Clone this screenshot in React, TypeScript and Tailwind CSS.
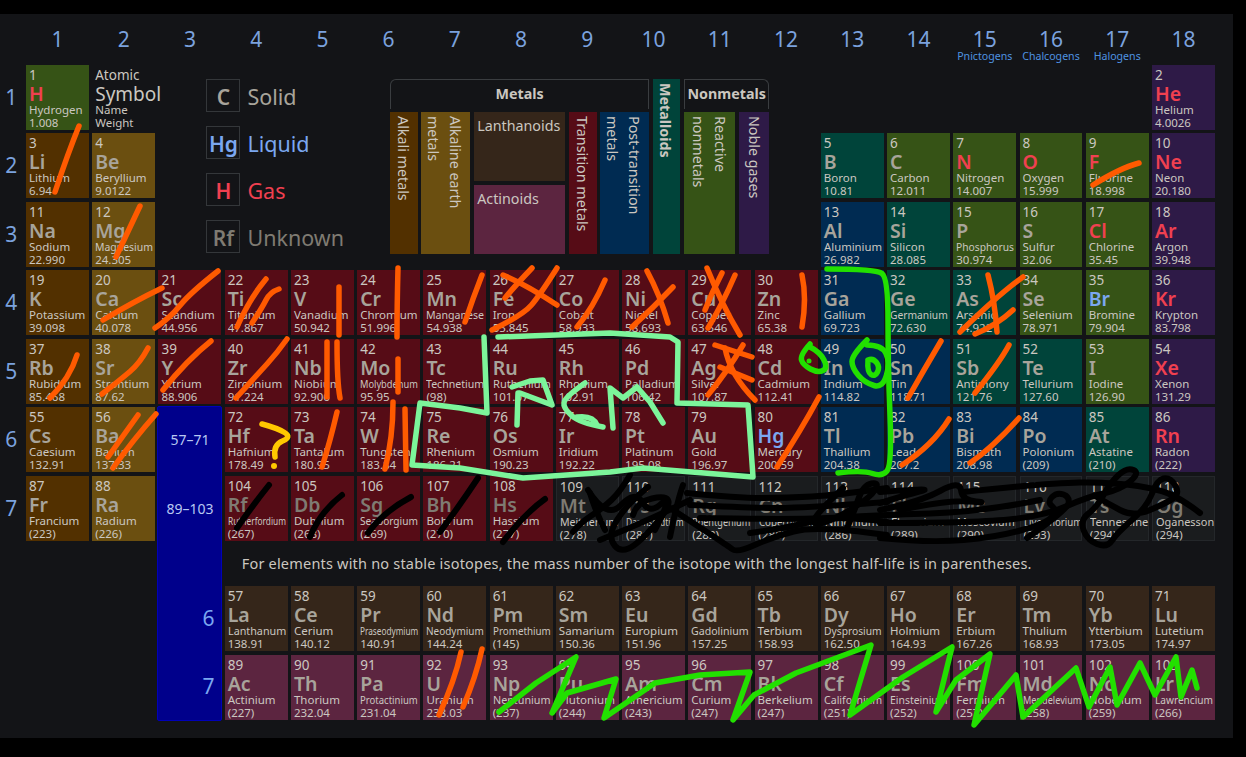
import { useLayoutEffect, useRef, useState, type ReactNode } from "react";
import { clsx } from "clsx";

type Cat = "alk" | "ear" | "tra" | "pos" | "met" | "rea" | "nob" | "lan" | "act" | "unk";
type State = "s" | "l" | "g" | "u";

const catBg: Record<Cat, string> = {
  alk: "bg-[#523000]",
  ear: "bg-[#6b4f10]",
  tra: "bg-[#560c16]",
  pos: "bg-[#002b52]",
  met: "bg-[#00443a]",
  rea: "bg-[#365316]",
  nob: "bg-[#2e1a47]",
  lan: "bg-[#35261a]",
  act: "bg-[#5c2540]",
  unk: "bg-[#1a1c1e] border border-[#24272a]",
};

const stateText: Record<State, string> = {
  s: "text-[#a8a49b]",
  l: "text-[#7ba7f0]",
  g: "text-[#f04050]",
  u: "text-[#7f7b72]",
};

// z, symbol, name, weight, column, row, category, state
const rawElements: [number, string, string, string, number, number, Cat, State?][] = [
  [1, "H", "Hydrogen", "1.008", 1, 1, "rea", "g"],
  [2, "He", "Helium", "4.0026", 18, 1, "nob", "g"],
  [3, "Li", "Lithium", "6.94", 1, 2, "alk"],
  [4, "Be", "Beryllium", "9.0122", 2, 2, "ear"],
  [5, "B", "Boron", "10.81", 13, 2, "met"],
  [6, "C", "Carbon", "12.011", 14, 2, "rea"],
  [7, "N", "Nitrogen", "14.007", 15, 2, "rea", "g"],
  [8, "O", "Oxygen", "15.999", 16, 2, "rea", "g"],
  [9, "F", "Fluorine", "18.998", 17, 2, "rea", "g"],
  [10, "Ne", "Neon", "20.180", 18, 2, "nob", "g"],
  [11, "Na", "Sodium", "22.990", 1, 3, "alk"],
  [12, "Mg", "Magnesium", "24.305", 2, 3, "ear"],
  [13, "Al", "Aluminium", "26.982", 13, 3, "pos"],
  [14, "Si", "Silicon", "28.085", 14, 3, "met"],
  [15, "P", "Phosphorus", "30.974", 15, 3, "rea"],
  [16, "S", "Sulfur", "32.06", 16, 3, "rea"],
  [17, "Cl", "Chlorine", "35.45", 17, 3, "rea", "g"],
  [18, "Ar", "Argon", "39.948", 18, 3, "nob", "g"],
  [19, "K", "Potassium", "39.098", 1, 4, "alk"],
  [20, "Ca", "Calcium", "40.078", 2, 4, "ear"],
  [21, "Sc", "Scandium", "44.956", 3, 4, "tra"],
  [22, "Ti", "Titanium", "47.867", 4, 4, "tra"],
  [23, "V", "Vanadium", "50.942", 5, 4, "tra"],
  [24, "Cr", "Chromium", "51.996", 6, 4, "tra"],
  [25, "Mn", "Manganese", "54.938", 7, 4, "tra"],
  [26, "Fe", "Iron", "55.845", 8, 4, "tra"],
  [27, "Co", "Cobalt", "58.933", 9, 4, "tra"],
  [28, "Ni", "Nickel", "58.693", 10, 4, "tra"],
  [29, "Cu", "Copper", "63.546", 11, 4, "tra"],
  [30, "Zn", "Zinc", "65.38", 12, 4, "tra"],
  [31, "Ga", "Gallium", "69.723", 13, 4, "pos"],
  [32, "Ge", "Germanium", "72.630", 14, 4, "met"],
  [33, "As", "Arsenic", "74.922", 15, 4, "met"],
  [34, "Se", "Selenium", "78.971", 16, 4, "rea"],
  [35, "Br", "Bromine", "79.904", 17, 4, "rea", "l"],
  [36, "Kr", "Krypton", "83.798", 18, 4, "nob", "g"],
  [37, "Rb", "Rubidium", "85.468", 1, 5, "alk"],
  [38, "Sr", "Strontium", "87.62", 2, 5, "ear"],
  [39, "Y", "Yttrium", "88.906", 3, 5, "tra"],
  [40, "Zr", "Zirconium", "91.224", 4, 5, "tra"],
  [41, "Nb", "Niobium", "92.906", 5, 5, "tra"],
  [42, "Mo", "Molybdenum", "95.95", 6, 5, "tra"],
  [43, "Tc", "Technetium", "(98)", 7, 5, "tra"],
  [44, "Ru", "Ruthenium", "101.07", 8, 5, "tra"],
  [45, "Rh", "Rhodium", "102.91", 9, 5, "tra"],
  [46, "Pd", "Palladium", "106.42", 10, 5, "tra"],
  [47, "Ag", "Silver", "107.87", 11, 5, "tra"],
  [48, "Cd", "Cadmium", "112.41", 12, 5, "tra"],
  [49, "In", "Indium", "114.82", 13, 5, "pos"],
  [50, "Sn", "Tin", "118.71", 14, 5, "pos"],
  [51, "Sb", "Antimony", "121.76", 15, 5, "met"],
  [52, "Te", "Tellurium", "127.60", 16, 5, "met"],
  [53, "I", "Iodine", "126.90", 17, 5, "rea"],
  [54, "Xe", "Xenon", "131.29", 18, 5, "nob", "g"],
  [55, "Cs", "Caesium", "132.91", 1, 6, "alk"],
  [56, "Ba", "Barium", "137.33", 2, 6, "ear"],
  [72, "Hf", "Hafnium", "178.49", 4, 6, "tra"],
  [73, "Ta", "Tantalum", "180.95", 5, 6, "tra"],
  [74, "W", "Tungsten", "183.84", 6, 6, "tra"],
  [75, "Re", "Rhenium", "186.21", 7, 6, "tra"],
  [76, "Os", "Osmium", "190.23", 8, 6, "tra"],
  [77, "Ir", "Iridium", "192.22", 9, 6, "tra"],
  [78, "Pt", "Platinum", "195.08", 10, 6, "tra"],
  [79, "Au", "Gold", "196.97", 11, 6, "tra"],
  [80, "Hg", "Mercury", "200.59", 12, 6, "tra", "l"],
  [81, "Tl", "Thallium", "204.38", 13, 6, "pos"],
  [82, "Pb", "Lead", "207.2", 14, 6, "pos"],
  [83, "Bi", "Bismuth", "208.98", 15, 6, "pos"],
  [84, "Po", "Polonium", "(209)", 16, 6, "pos"],
  [85, "At", "Astatine", "(210)", 17, 6, "met"],
  [86, "Rn", "Radon", "(222)", 18, 6, "nob", "g"],
  [87, "Fr", "Francium", "(223)", 1, 7, "alk"],
  [88, "Ra", "Radium", "(226)", 2, 7, "ear"],
  [104, "Rf", "Rutherfordium", "(267)", 4, 7, "tra", "u"],
  [105, "Db", "Dubnium", "(268)", 5, 7, "tra", "u"],
  [106, "Sg", "Seaborgium", "(269)", 6, 7, "tra", "u"],
  [107, "Bh", "Bohrium", "(270)", 7, 7, "tra", "u"],
  [108, "Hs", "Hassium", "(277)", 8, 7, "tra", "u"],
  [109, "Mt", "Meitnerium", "(278)", 9, 7, "unk", "u"],
  [110, "Ds", "Darmstadtium", "(281)", 10, 7, "unk", "u"],
  [111, "Rg", "Roentgenium", "(282)", 11, 7, "unk", "u"],
  [112, "Cn", "Copernicium", "(285)", 12, 7, "unk", "u"],
  [113, "Nh", "Nihonium", "(286)", 13, 7, "unk", "u"],
  [114, "Fl", "Flerovium", "(289)", 14, 7, "unk", "u"],
  [115, "Mc", "Moscovium", "(290)", 15, 7, "unk", "u"],
  [116, "Lv", "Livermorium", "(293)", 16, 7, "unk", "u"],
  [117, "Ts", "Tennessine", "(294)", 17, 7, "unk", "u"],
  [118, "Og", "Oganesson", "(294)", 18, 7, "unk", "u"],
  [57, "La", "Lanthanum", "138.91", 4, 9, "lan"],
  [58, "Ce", "Cerium", "140.12", 5, 9, "lan"],
  [59, "Pr", "Praseodymium", "140.91", 6, 9, "lan"],
  [60, "Nd", "Neodymium", "144.24", 7, 9, "lan"],
  [61, "Pm", "Promethium", "(145)", 8, 9, "lan"],
  [62, "Sm", "Samarium", "150.36", 9, 9, "lan"],
  [63, "Eu", "Europium", "151.96", 10, 9, "lan"],
  [64, "Gd", "Gadolinium", "157.25", 11, 9, "lan"],
  [65, "Tb", "Terbium", "158.93", 12, 9, "lan"],
  [66, "Dy", "Dysprosium", "162.50", 13, 9, "lan"],
  [67, "Ho", "Holmium", "164.93", 14, 9, "lan"],
  [68, "Er", "Erbium", "167.26", 15, 9, "lan"],
  [69, "Tm", "Thulium", "168.93", 16, 9, "lan"],
  [70, "Yb", "Ytterbium", "173.05", 17, 9, "lan"],
  [71, "Lu", "Lutetium", "174.97", 18, 9, "lan"],
  [89, "Ac", "Actinium", "(227)", 4, 10, "act"],
  [90, "Th", "Thorium", "232.04", 5, 10, "act"],
  [91, "Pa", "Protactinium", "231.04", 6, 10, "act"],
  [92, "U", "Uranium", "238.03", 7, 10, "act"],
  [93, "Np", "Neptunium", "(237)", 8, 10, "act"],
  [94, "Pu", "Plutonium", "(244)", 9, 10, "act"],
  [95, "Am", "Americium", "(243)", 10, 10, "act"],
  [96, "Cm", "Curium", "(247)", 11, 10, "act"],
  [97, "Bk", "Berkelium", "(247)", 12, 10, "act"],
  [98, "Cf", "Californium", "(251)", 13, 10, "act"],
  [99, "Es", "Einsteinium", "(252)", 14, 10, "act"],
  [100, "Fm", "Fermium", "(257)", 15, 10, "act"],
  [101, "Md", "Mendelevium", "(258)", 16, 10, "act"],
  [102, "No", "Nobelium", "(259)", 17, 10, "act"],
  [103, "Lr", "Lawrencium", "(266)", 18, 10, "act"],
];

const groupNotes: Record<number, string> = { 15: "Pnictogens", 16: "Chalcogens", 17: "Halogens" };

// long names get squeezed to fit the cell, like a viewbox would
function FitName({ name }: { name: string }) {
  const ref = useRef<HTMLSpanElement>(null);
  const [scale, setScale] = useState(1);
  useLayoutEffect(() => {
    const w = ref.current?.offsetWidth ?? 0;
    if (w > 58) setScale(58 / w);
  }, [name]);
  return (
    <span ref={ref} className="inline-block origin-left" style={{ transform: `scaleX(${scale})` }}>
      {name}
    </span>
  );
}

function ElementCell({ el }: { el: (typeof rawElements)[number] }) {
  const [z, symbol, name, weight, col, row, cat, state = "s"] = el;
  return (
    <div
      className={clsx("pl-[3px] whitespace-nowrap text-[#cbc7c0]", catBg[cat])}
      style={{ gridColumn: col + 1, gridRow: row + 1 }}
    >
      <div className="h-[20px] text-[13.5px] leading-[20px]">{z}</div>
      <div className={clsx("h-[19px] text-[19.5px] leading-[18px] font-semibold", stateText[state])}>{symbol}</div>
      <div className="h-[13px] text-[11.5px] leading-[12px]">
        <FitName name={name} />
      </div>
      <div className="text-[11.5px] leading-[12px]">{weight}</div>
    </div>
  );
}

function StateRow({ sym, label, tone }: { sym: string; label: string; tone: State }) {
  return (
    <div className="flex h-[33px] items-center gap-[7px]">
      <div
        className={clsx(
          "flex h-[33px] w-[34px] items-center justify-center border border-[#34373a] pt-[3px] text-[21px] leading-[28px] font-semibold",
          stateText[tone],
        )}
      >
        {sym}
      </div>
      <span className={clsx("h-[33px] text-[21.5px] leading-[36px]", stateText[tone])}>{label}</span>
    </div>
  );
}

function VBlock({ children, className, strong }: { children: ReactNode; className: string; strong?: boolean }) {
  return (
    <div
      className={clsx(
        "h-full pt-[4px] pr-[4px] text-[14.3px] leading-[22px] text-[#cbc7c0] [writing-mode:vertical-rl]",
        strong && "font-bold",
        className,
      )}
    >
      {children}
    </div>
  );
}

function Bracket({ label, left }: { label: string; left?: boolean }) {
  return (
    <div
      className={clsx(
        "flex h-[30px] items-center justify-center border-x border-t border-[#3a3d40] pb-[2px] text-[14.3px] font-bold text-[#cbc7c0]",
        left ? "rounded-tl-[6px]" : "rounded-tr-[6px]",
      )}
    >
      {label}
    </div>
  );
}

const inkStrokes: [string, string][] = [
  // orange tally marks
  ["#ff5a00", "79,126 68,153 55,192"],
  ["#ff5a00", "140,206 130,227 116,257"],
  ["#ff5a00", "162,288 133,302 103,320"],
  ["#ff5a00", "218,271 190,293 170,318 155,328"],
  ["#ff5a00", "266,279 250,298 237,327"],
  ["#ff5a00", "279,289 270,292 262,308 252,323"],
  ["#ff5a00", "339,287 339,335"],
  ["#ff5a00", "398,268 397,305 397,337"],
  ["#ff5a00", "77,355 70,378 50,398"],
  ["#ff5a00", "148,348 140,363 120,380 102,394"],
  ["#ff5a00", "211,341 187,360 163,390"],
  ["#ff5a00", "287,339 277,353 257,375 236,398"],
  ["#ff5a00", "327,342 327,397"],
  ["#ff5a00", "337,342 337,382 340,398"],
  ["#ff5a00", "398,359 398,392"],
  ["#ff5a00", "393,402 393,438 385,469"],
  ["#ff5a00", "405,409 406,470"],
  ["#ff5a00", "138,415 108,457"],
  ["#ff5a00", "156,414 133,440 113,468"],
  ["#ff5a00", "337,412 330,442 322,467"],
  ["#ff5a00", "482,275 473,298 465,322"],
  ["#ff5a00", "532,268 513,288 505,298"],
  ["#ff5a00", "557,268 540,295 523,315 492,330"],
  ["#ff5a00", "503,275 527,285 557,305"],
  ["#ff5a00", "605,280 593,308 577,327"],
  ["#ff5a00", "647,271 660,295 668,323"],
  ["#ff5a00", "673,287 653,308 632,327"],
  ["#ff5a00", "707,268 722,305 740,335"],
  ["#ff5a00", "722,273 712,292 705,310"],
  ["#ff5a00", "735,275 722,305 708,328"],
  ["#ff5a00", "802,275 807,298 802,327"],
  ["#ff5a00", "715,345 752,357"],
  ["#ff5a00", "743,345 727,372 708,395"],
  ["#ff5a00", "720,367 752,380"],
  ["#ff5a00", "725,348 730,375 755,400"],
  ["#ff5a00", "819,397 800,432 777,467"],
  ["#ff5a00", "988,275 995,302 997,332"],
  ["#ff5a00", "1023,277 1000,293 960,332"],
  ["#ff5a00", "1013,310 997,325 975,334"],
  ["#ff5a00", "941,341 925,368 908,398"],
  ["#ff5a00", "1009,345 1000,362 975,393"],
  ["#ff5a00", "949,419 933,445 902,465"],
  ["#ff5a00", "1019,418 993,447 970,463"],
  ["#ff5a00", "1139,163 1120,168 1093,185"],
  ["#ff5a00", "461,652 455,680 439,715"],
  ["#ff5a00", "482,649 476,677 463,707"],
  // green rings and box
  ["#22e000", "827,269 876,269 888,278 888,365 892,465 882,477 863,470 838,473"],
  ["#22e000", "867,340 852,355 852,368 865,383 883,388 890,362 882,345 867,345"],
  ["#22e000", "868,360 867,372 875,377 880,367 873,358 868,360"],
  ["#22e000", "810,344 800,355 803,365 818,373 828,368 820,352 810,347"],
  // mint letters
  ["#7cf59a", "585,383 565,397 563,408 580,423 603,427"],
  ["#7cf59a", "577,417 593,415 597,425"],
  // yellow question mark
  ["#ffc800", "262,424 277,428 292,437 273,445 275,457"],
  // black ticks and scribble
  ["#000000", "269,485 253,505 237,528"],
  ["#000000", "342,495 320,512 310,537"],
  ["#000000", "411,497 383,512 368,533"],
  ["#000000", "478,478 460,505 440,532"],
  ["#000000", "545,499 523,515 503,542"],
  ["#000000", "630,475 620,492 603,508 580,523 573,532"],
  ["#000000", "590,493 595,510 605,530"],
  ["#000000", "588,490 607,520 635,490 650,515 675,490 655,530"],
  ["#000000", "600,540 650,520 690,500"],
  ["#000000", "648,487 630,502 613,525 610,540 620,552 637,545 670,508 667,495 637,502 633,515"],
  ["#000000", "683,485 677,502 670,537"],
  ["#000000", "670,508 727,545 737,553 770,538 817,525 887,535"],
  ["#000000", "687,493 737,498 787,498 837,495 887,488"],
  ["#000000", "690,505 753,508 803,508 887,502"],
  ["#000000", "700,518 800,520 880,515 980,512 1040,500"],
  ["#000000", "750,533 787,528 837,515 887,522"],
  ["#000000", "843,488 823,507 810,525 830,522 870,498 880,482 863,485 853,515 847,528"],
  ["#000000", "880,492 933,488 913,493 880,503"],
  ["#000000", "880,510 920,502 960,480 962,500 990,503 947,500 900,510"],
  ["#000000", "880,538 930,543 997,537 1047,523 1057,510 1047,502 1057,492 1070,497 1067,510 1027,538"],
  ["#000000", "880,523 980,523 1047,515 1087,497 1120,490 1140,473 1127,467 1110,483 1097,507 1080,520 1087,540 1107,548 1117,533 1147,507 1157,480 1170,477 1180,493 1167,503 1133,517 1107,503 1097,497"],
  ["#000000", "963,492 1047,483 1113,482 1163,490 1187,503 1200,513"],
];

// these keep their corners
const inkZigzags: [string, string][] = [
  ["#22e000", "499,712 536,683 576,657 552,713 567,693 616,679 604,718 655,683 700,675 750,672 733,720 754,695 796,673 871,645 850,715 903,677 952,647 936,712 956,680 990,654 974,725 1016,675 1023,717 1076,668 1089,707 1110,667 1117,705 1140,663 1155,695 1176,657 1181,697 1192,670 1197,688"],
  ["#7cf59a", "484,337 487,413 460,408 420,403 412,465 460,468 523,478 610,472 643,468 753,477 748,405 677,403 678,342 670,337 610,333 498,337"],
  ["#7cf59a", "512,387 530,381 543,380 552,405 520,393"],
  ["#7cf59a", "518,393 517,425"],
  ["#7cf59a", "613,428 610,388 623,398 637,387 650,402 663,423"],
];

// rounds a pen stroke by running through the midpoints of its segments
function smoothPath(pts: string) {
  const p = pts.split(" ").map((s) => s.split(",").map(Number));
  if (p.length < 3) return `M${pts.replace(" ", "L")}`;
  let d = `M${p[0][0]} ${p[0][1]}`;
  for (let i = 1; i < p.length - 1; i++) {
    const last = i === p.length - 2;
    const mx = last ? p[i + 1][0] : (p[i][0] + p[i + 1][0]) / 2;
    const my = last ? p[i + 1][1] : (p[i][1] + p[i + 1][1]) / 2;
    d += ` Q${p[i][0]} ${p[i][1]} ${mx} ${my}`;
  }
  return d;
}

export default function App() {
  const font = { fontFamily: '"Noto Sans", sans-serif' };
  return (
    <div className="relative h-[757px] w-[1246px] overflow-hidden bg-black pt-[14px]" style={font}>
      <div className="grid h-[724px] w-[1233px] grid-cols-[22.7px_repeat(18,62.94px)] grid-rows-[47.4px_repeat(7,65px)_38.2px_repeat(2,65px)] content-start gap-x-[3.3px] gap-y-[3.5px] bg-[#131417]">
        {Array.from({ length: 18 }, (_, i) => (
          <div
            key={i}
            className="flex flex-col items-center pt-[12px] text-[#7ba2de]"
            style={{ gridColumn: i + 2, gridRow: 1 }}
          >
            <span className="text-[21px] leading-[26px]">{i + 1}</span>
            <span className="-mt-[2px] h-[12px] text-[10.6px] leading-[12px] text-[#4f93e0]">{groupNotes[i + 1]}</span>
          </div>
        ))}
        {Array.from({ length: 7 }, (_, i) => (
          <div
            key={i}
            className="flex items-center justify-center text-[21px] text-[#7ba2de]"
            style={{ gridColumn: 1, gridRow: i + 2 }}
          >
            {i + 1}
          </div>
        ))}

        {rawElements.map((el) => (
          <ElementCell key={el[0]} el={el} />
        ))}

        {/* key to the cell layout */}
        <div className="col-start-3 row-start-2 pl-[3px] whitespace-nowrap text-[#cbc7c0]">
          <div className="h-[20px] text-[13.5px] leading-[20px]">Atomic</div>
          <div className="h-[19px] text-[19px] leading-[18px]">Symbol</div>
          <div className="h-[13px] text-[11.5px] leading-[12px]">Name</div>
          <div className="text-[11.5px] leading-[12px]">Weight</div>
        </div>

        {/* states of matter */}
        <div className="col-start-4 row-start-2 row-span-3 ml-[48px] flex w-[150px] flex-col gap-[14px] pt-[14px]">
          <StateRow sym="C" label="Solid" tone="s" />
          <StateRow sym="Hg" label="Liquid" tone="l" />
          <StateRow sym="H" label="Gas" tone="g" />
          <StateRow sym="Rf" label="Unknown" tone="u" />
        </div>

        {/* category legend */}
        <div className="col-start-7 col-span-7 row-start-2 row-span-3 ml-[33px] mt-[14px] flex h-[175px] w-[379px] gap-[4px]">
          <div className="flex w-[259px] flex-col gap-[3px]">
            <Bracket label="Metals" left />
            <div className="flex h-[142px]">
              <VBlock className="mr-[3px] w-[28px] bg-[#523000]">Alkali metals</VBlock>
              <VBlock className="mr-[4px] w-[49px] bg-[#6b4f10]">
                Alkaline earth
                <br />
                metals
              </VBlock>
              <div className="mr-[4px] flex w-[91px] flex-col gap-[4px] text-[14.3px] text-[#cbc7c0]">
                <div className="h-[69px] bg-[#35261a] px-[3px] pt-[3px]">Lanthanoids</div>
                <div className="h-[69px] bg-[#5c2540] px-[3px] pt-[3px]">Actinoids</div>
              </div>
              <VBlock className="mr-[3px] w-[28px] bg-[#560c16]">Transition metals</VBlock>
              <VBlock className="w-[49px] bg-[#002b52]">
                Post-transition
                <br />
                metals
              </VBlock>
            </div>
          </div>
          <VBlock strong className="w-[27px] bg-[#00443a]">Metalloids</VBlock>
          <div className="flex w-[85px] flex-col gap-[3px]">
            <Bracket label="Nonmetals" />
            <div className="flex h-[142px] gap-[4px]">
              <VBlock className="w-[51px] bg-[#365316]">
                Reactive
                <br />
                nonmetals
              </VBlock>
              <VBlock className="w-[30px] bg-[#2e1a47]">Noble gases</VBlock>
            </div>
          </div>
        </div>

        {/* f-block placeholder column */}
        <div className="col-start-4 row-start-7 row-span-5 -m-[1px] grid grid-rows-[65px_65px_38.2px_65px_65px] gap-y-[3.5px] rounded-[2px] border border-[#0000b8] bg-[#00008b] text-[#b9c8f2]">
          <div className="flex items-center justify-center text-[14px]">57–71</div>
          <div className="flex items-center justify-center text-[14px]">89–103</div>
          <div />
          <div className="flex items-center justify-end pr-[7px] text-[21px] text-[#7ba7f0]">6</div>
          <div className="flex items-center justify-end pr-[7px] text-[21px] text-[#7ba7f0]">7</div>
        </div>

        <div className="col-start-5 col-span-15 row-start-9 flex items-center pl-[17px] text-[14.5px] tracking-[0.2px] whitespace-nowrap text-[#cbc7c0]">
          For elements with no stable isotopes, the mass number of the isotope with the longest half-life is in parentheses.
        </div>
      </div>

      {/* pen marks drawn on top of the screenshot */}
      <svg className="pointer-events-none absolute inset-0" width="1246" height="757" fill="none" strokeWidth="5.5" strokeLinecap="round" strokeLinejoin="round">
        {inkStrokes.map(([color, pts], i) => (
          <path key={i} d={smoothPath(pts)} stroke={color} strokeWidth={color === "#000000" ? 6 : undefined} />
        ))}
        {inkZigzags.map(([color, pts], i) => (
          <polyline key={i} points={pts} stroke={color} />
        ))}
        <circle cx="809" cy="361" r="2.5" fill="#22e000" stroke="none" />
        <circle cx="274" cy="466" r="3" fill="#ffc800" stroke="none" />
      </svg>
    </div>
  );
}
